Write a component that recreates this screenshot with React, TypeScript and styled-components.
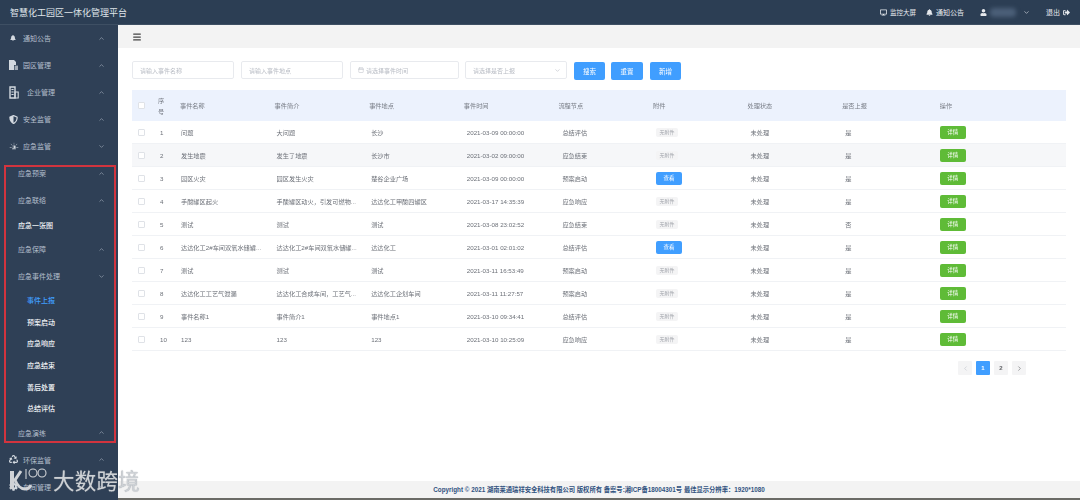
import React from "react";
import styled, { createGlobalStyle } from "styled-components";
import { ChevronUp, ChevronDown, ChevronLeft, ChevronRight, Calendar, Menu } from "lucide-react";
import { FaBell, FaShieldAlt, FaRecycle, FaDesktop, FaUser, FaSignOutAlt, FaCog } from "react-icons/fa";
import { GiSiren } from "react-icons/gi";

const Global = createGlobalStyle`
  html, body { margin: 0; padding: 0; height: 500px; overflow: hidden; background: #fff; }
  * { box-sizing: border-box; }
  body { font-family: "Liberation Sans", "Noto Sans CJK SC", sans-serif; }
`;

const Page = styled.div`
  position: relative;
  width: 1080px;
  height: 500px;
  display: flex;
  flex-direction: column;
  overflow: hidden;
  filter: blur(0.45px);
`;

const Header = styled.header`
  height: 25px;
  flex: none;
  background: #2c3e54;
  border-bottom: 1px solid #3e4f63;
  display: flex;
  align-items: center;
  justify-content: space-between;
  padding: 0 9px 0 10px;
  color: #e4e8ec;
`;
const Title = styled.div`
  font-size: 9px;
  color: #dfe4e9;
`;
const HeaderRight = styled.div`
  display: flex;
  align-items: center;
  font-size: 7px;
`;
const HeaderItem = styled.span<{ $w: number; $size?: number }>`
  width: ${(p) => p.$w}px;
  display: flex;
  align-items: center;
  gap: 3px;
  font-size: ${(p) => p.$size ?? 7}px;
  color: #e6e9ed;
`;
const BlurredName = styled.span`
  width: 26px;
  height: 9px;
  margin: 0 4px 0 0;
  background: #4b5f78;
  border-radius: 4px;
  filter: blur(2px);
`;

const Body = styled.div`
  flex: 1;
  display: flex;
  min-height: 0;
`;
const Sidebar = styled.aside`
  position: relative;
  width: 118px;
  flex: none;
  background: #2f4056;
  overflow: hidden;
`;
const NavItem = styled.div<{ $indent: number; $h?: number; $color?: string; $bold?: boolean }>`
  height: ${(p) => p.$h ?? 27}px;
  padding: 0 13px 1px ${(p) => p.$indent}px;
  display: flex;
  align-items: center;
  font-size: 7px;
  font-weight: ${(p) => (p.$bold ? 500 : 400)};
  color: ${(p) => p.$color ?? "#b4bfcc"};
`;
const NavIcon = styled.span<{ $w: number }>`
  width: ${(p) => p.$w}px;
  flex: none;
  display: flex;
  align-items: center;
  color: #d3d9e0;
`;
const NavLabel = styled.span`
  flex: 1;
`;
const Annotation = styled.div`
  position: absolute;
  left: 4px;
  top: 140px;
  width: 112px;
  height: 278px;
  border: 2px solid #d2343e;
  pointer-events: none;
`;

const Main = styled.main`
  flex: 1;
  display: flex;
  flex-direction: column;
  min-width: 0;
`;
const Toolbar = styled.div`
  height: 23px;
  flex: none;
  background: #f3f3f3;
  display: flex;
  align-items: center;
  padding-left: 14px;
  color: #444;
`;
const Content = styled.div`
  flex: 1;
  padding: 13px 14px 0;
  min-height: 0;
`;
const Filters = styled.div`
  display: flex;
  align-items: flex-start;
  height: 18px;
  margin-bottom: 11px;
`;
const Field = styled.div<{ $w: number; $mr: number }>`
  width: ${(p) => p.$w}px;
  margin-right: ${(p) => p.$mr}px;
  height: 18px;
  border: 1px solid #e8eaee;
  border-radius: 2px;
  display: flex;
  align-items: center;
  gap: 2px;
  padding: 0 5px 0 7px;
  font-size: 6px;
  color: #b8bcc4;
`;
const FieldText = styled.span`
  flex: 1;
`;
const Action = styled.button<{ $w: number; $mr: number }>`
  width: ${(p) => p.$w}px;
  margin: 1px ${(p) => p.$mr}px 0 0;
  height: 18px;
  padding: 0;
  border: none;
  border-radius: 2px;
  background: #409eff;
  color: #fff;
  font: inherit;
  font-size: 6.5px;
`;

const grid = "23px 21px repeat(8, 94.6px) 1fr";
const HeadRow = styled.div`
  display: grid;
  grid-template-columns: ${grid};
  height: 31px;
  background: #ecf2fd;
  align-items: center;
  font-size: 6.2px;
  color: #777c85;
`;
const Row = styled.div<{ $shade?: boolean }>`
  display: grid;
  grid-template-columns: ${grid};
  height: 23px;
  align-items: center;
  font-size: 6.2px;
  color: #6c7078;
  background: ${(p) => (p.$shade ? "#f6f7f9" : "#fff")};
  border-bottom: 1px solid #f0f2f5;
`;
const Box = styled.span`
  width: 7px;
  height: 7px;
  margin-left: 6px;
  background: #fff;
  border: 1px solid #dfe2e7;
  border-radius: 1px;
`;
const Cell = styled.span<{ $pl?: number }>`
  padding-left: ${(p) => p.$pl ?? 4}px;
  white-space: nowrap;
`;
const SeqHead = styled.span`
  text-align: center;
  line-height: 11px;
  width: 12px;
`;
const Seq = styled.span`
  padding-left: 5px;
`;
const NoFile = styled.span`
  display: inline-block;
  margin-left: 7px;
  width: 22px;
  height: 9px;
  line-height: 9px;
  text-align: center;
  font-size: 5px;
  color: #a3a6ad;
  background: #f4f4f5;
  border-radius: 2px;
`;
const TableBtn = styled.span<{ $bg: string }>`
  display: block;
  margin-left: 7px;
  width: 26px;
  height: 13px;
  line-height: 13px;
  text-align: center;
  font-size: 5.5px;
  color: #fff;
  background: ${(p) => p.$bg};
  border-radius: 2px;
`;
const Pager = styled.div`
  display: flex;
  justify-content: flex-end;
  gap: 4px;
  margin-top: 10px;
  padding-right: 40px;
`;
const PageBtn = styled.span<{ $active?: boolean }>`
  width: 14px;
  height: 14px;
  display: flex;
  align-items: center;
  justify-content: center;
  font-size: 6px;
  font-weight: 700;
  border-radius: 1px;
  color: ${(p) => (p.$active ? "#fff" : "#606266")};
  background: ${(p) => (p.$active ? "#409eff" : "#f4f4f5")};
`;
const Footer = styled.footer`
  height: 19px;
  flex: none;
  background: #f3f3f3;
  border-bottom: 2px solid #6b6b66;
  display: flex;
  align-items: center;
  justify-content: center;
  font-size: 6.3px;
  font-weight: 700;
  color: #31527f;
`;

const Watermark = styled.div`
  position: absolute;
  left: 9px;
  top: 465px;
  display: flex;
  align-items: center;
  pointer-events: none;
`;
const WatermarkText = styled.span`
  font-family: "Noto Sans CJK SC", sans-serif;
  font-size: 21.5px;
  line-height: 28px;
  letter-spacing: 0.2px;
  color: #cdd1d5;
  text-shadow: 0 0 1px #8b9098;
  margin-left: 5px;
`;

type R = [string, string, string, string, string, boolean, string];
const rows: R[] = [
  ["问题", "大问题", "长沙", "2021-03-09 00:00:00", "总结评估", false, "是"],
  ["发生地震", "发生了地震", "长沙市", "2021-03-02 09:00:00", "应急结束", false, "是"],
  ["园区火灾", "园区发生火灾", "楚谷企业广场", "2021-03-09 00:00:00", "预案启动", true, "是"],
  ["手酸罐区起火", "手酸罐区动火，引发可燃物...", "达达化工甲酸四罐区", "2021-03-17 14:35:39", "应急响应", false, "是"],
  ["测试", "测试", "测试", "2021-03-08 23:02:52", "应急结束", false, "否"],
  ["达达化工2#车间双氧水储罐...", "达达化工2#车间双氧水储罐...", "达达化工", "2021-03-01 02:01:02", "总结评估", true, "是"],
  ["测试", "测试", "测试", "2021-03-11 16:53:49", "预案启动", false, "是"],
  ["达达化工工艺气泄漏", "达达化工合成车间，工艺气...", "达达化工企划车间", "2021-03-11 11:27:57", "预案启动", false, "是"],
  ["事件名称1", "事件简介1", "事件地点1", "2021-03-10 09:34:41", "总结评估", false, "是"],
  ["123", "123", "123", "2021-03-10 10:25:09", "应急响应", false, "是"],
];

const Up = () => <ChevronUp size={7} color="#aab5c2" />;
const Down = () => <ChevronDown size={7} color="#aab5c2" />;

const ParkIcon = () => (
  <svg width="9" height="10" viewBox="0 0 9 10" fill="#d3d9e0" aria-hidden="true">
    <path d="M0 0h5l2 2v3H5v5H0z" />
    <path d="M5.6 5.6H9V10H5.6z" opacity="0.7" />
  </svg>
);
const CompanyIcon = () => (
  <svg width="10" height="13" viewBox="0 0 10 13" fill="none" stroke="#d3d9e0" aria-hidden="true">
    <path d="M1 1h5v11H1z" strokeWidth="1.4" />
    <path d="M6 6h3.2v6H6zM2.4 3.5h2.2M2.4 6h2.2M2.4 8.5h2.2" strokeWidth="1.1" />
  </svg>
);

export default function App() {
  return (
    <Page>
      <Global />
      <Header>
        <Title>智慧化工园区一体化管理平台</Title>
        <HeaderRight>
          <HeaderItem $w={46} $size={6.5}><FaDesktop size={7} />监控大屏</HeaderItem>
          <HeaderItem $w={54} $size={7}><FaBell size={7} />通知公告</HeaderItem>
          <HeaderItem $w={66}>
            <FaUser size={7} />
            <BlurredName />
            <ChevronDown size={7} />
          </HeaderItem>
          <HeaderItem $w={25} $size={7}>退出<FaSignOutAlt size={7} /></HeaderItem>
        </HeaderRight>
      </Header>
      <Body>
        <Sidebar>
          <NavItem $indent={10}><NavIcon $w={13}><FaBell size={6} /></NavIcon><NavLabel>通知公告</NavLabel><Up /></NavItem>
          <NavItem $indent={9}><NavIcon $w={14}><ParkIcon /></NavIcon><NavLabel>园区管理</NavLabel><Up /></NavItem>
          <NavItem $indent={9}><NavIcon $w={18}><CompanyIcon /></NavIcon><NavLabel>企业管理</NavLabel><Up /></NavItem>
          <NavItem $indent={9}><NavIcon $w={14}><FaShieldAlt size={9} /></NavIcon><NavLabel>安全监管</NavLabel><Up /></NavItem>
          <NavItem $indent={9}><NavIcon $w={14}><GiSiren size={10} /></NavIcon><NavLabel>应急监管</NavLabel><Down /></NavItem>
          <NavItem $indent={18}><NavLabel>应急预案</NavLabel><Up /></NavItem>
          <NavItem $indent={18}><NavLabel>应急联络</NavLabel><Up /></NavItem>
          <NavItem $indent={18} $h={22} $color="#f2f4f6" $bold>应急一张图</NavItem>
          <NavItem $indent={18}><NavLabel>应急保障</NavLabel><Up /></NavItem>
          <NavItem $indent={18}><NavLabel>应急事件处理</NavLabel><Down /></NavItem>
          <NavItem $indent={27} $h={21.6} $color="#409eff" $bold>事件上报</NavItem>
          <NavItem $indent={27} $h={21.6} $color="#f2f4f6" $bold>预案启动</NavItem>
          <NavItem $indent={27} $h={21.6} $color="#f2f4f6" $bold>应急响应</NavItem>
          <NavItem $indent={27} $h={21.6} $color="#f2f4f6" $bold>应急结束</NavItem>
          <NavItem $indent={27} $h={21.6} $color="#f2f4f6" $bold>善后处置</NavItem>
          <NavItem $indent={27} $h={21.6} $color="#f2f4f6" $bold>总结评估</NavItem>
          <NavItem $indent={18}><NavLabel>应急演练</NavLabel><Up /></NavItem>
          <NavItem $indent={9}><NavIcon $w={14}><FaRecycle size={9} /></NavIcon><NavLabel>环保监管</NavLabel><Up /></NavItem>
          <NavItem $indent={9}><NavIcon $w={14}><FaCog size={9} /></NavIcon><NavLabel>车间管理</NavLabel><Up /></NavItem>
          <Annotation />
        </Sidebar>
        <Main>
          <Toolbar><Menu size={10} strokeWidth={3} /></Toolbar>
          <Content>
            <Filters>
              <Field $w={102} $mr={7}>请输入事件名称</Field>
              <Field $w={102} $mr={7}>请输入事件地点</Field>
              <Field $w={109} $mr={6}><Calendar size={6} />请选择事件时间</Field>
              <Field $w={102} $mr={7}><FieldText>请选择是否上报</FieldText><ChevronDown size={7} /></Field>
              <Action $w={31} $mr={6}>搜索</Action>
              <Action $w={32} $mr={7}>重置</Action>
              <Action $w={31} $mr={0}>新增</Action>
            </Filters>
            <HeadRow>
              <Box />
              <SeqHead>序号</SeqHead>
              <Cell>事件名称</Cell>
              <Cell>事件简介</Cell>
              <Cell>事件地点</Cell>
              <Cell>事件时间</Cell>
              <Cell>流程节点</Cell>
              <Cell>附件</Cell>
              <Cell>处理状态</Cell>
              <Cell>是否上报</Cell>
              <Cell $pl={7}>操作</Cell>
            </HeadRow>
            {rows.map((r, i) => (
              <Row key={i} $shade={i === 1}>
                <Box />
                <Seq>{i + 1}</Seq>
                <Cell $pl={5}>{r[0]}</Cell>
                <Cell $pl={6}>{r[1]}</Cell>
                <Cell $pl={6}>{r[2]}</Cell>
                <Cell $pl={7}>{r[3]}</Cell>
                <Cell $pl={8}>{r[4]}</Cell>
                <span>{r[5] ? <TableBtn $bg="#409eff">查看</TableBtn> : <NoFile>无附件</NoFile>}</span>
                <Cell $pl={7}>未处理</Cell>
                <Cell $pl={7}>{r[6]}</Cell>
                <span><TableBtn $bg="#5fbb37">详情</TableBtn></span>
              </Row>
            ))}
            <Pager>
              <PageBtn><ChevronLeft size={7} color="#c0c4cc" /></PageBtn>
              <PageBtn $active>1</PageBtn>
              <PageBtn>2</PageBtn>
              <PageBtn><ChevronRight size={7} /></PageBtn>
            </Pager>
          </Content>
          <Footer>Copyright © 2021 湖南莱通瑞祥安全科技有限公司 版权所有 备案号:湘ICP备18004301号 最佳显示分辨率：1920*1080</Footer>
        </Main>
      </Body>
      <Watermark>
        <svg width="39" height="30" viewBox="0 0 39 30" fill="none" stroke="#d0d3d7" aria-hidden="true">
          <path d="M3 6v18" strokeWidth="4" />
          <path d="M12 6 6 15c2 5 6 9 10 9 3 0 5-2 6-4" strokeWidth="3" />
          <path d="M17 4v10" strokeWidth="1.1" />
          <circle cx="24" cy="8" r="4" strokeWidth="1.1" />
          <circle cx="33" cy="8" r="4" strokeWidth="1.1" />
        </svg>
        <WatermarkText>大数跨境</WatermarkText>
      </Watermark>
    </Page>
  );
}
